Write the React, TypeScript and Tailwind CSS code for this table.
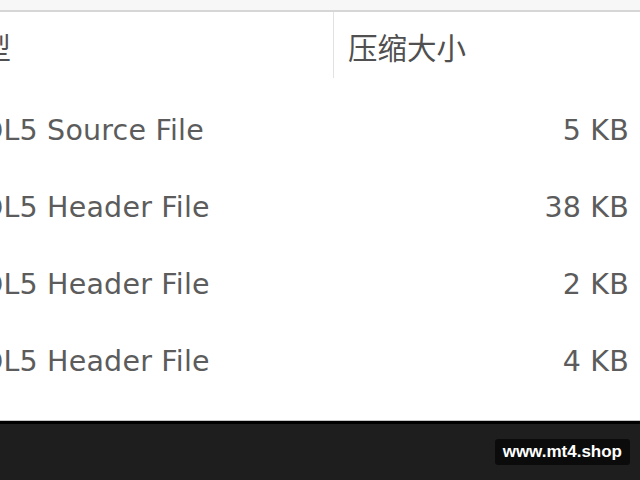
import React from 'react';

const rows = [
  { type: 'MQL5 Source File', size: '5 KB' },
  { type: 'MQL5 Header File', size: '38 KB' },
  { type: 'MQL5 Header File', size: '2 KB' },
  { type: 'MQL5 Header File', size: '4 KB' },
];

const font = { fontFamily: '"DejaVu Sans", "Noto Sans CJK SC", sans-serif' };

export default function App() {
  return (
    <div className="w-[640px] h-[480px] overflow-hidden bg-white flex flex-col" style={font}>
      {/* top strip */}
      <div className="h-[12px] bg-[#f7f7f7] border-b-2 border-[#d6d6d6]" />

      {/* column headers */}
      <div className="flex h-[66px] text-[29.5px] text-[#505050]" style={{ fontFamily: '"Noto Sans CJK SC", sans-serif' }}>
        <div className="w-[334px] border-r border-[#e2e2e2] flex items-center overflow-hidden pt-[3px]">
          <span className="ml-[-48px] whitespace-nowrap">类型</span>
        </div>
        <div className="flex-1 flex items-center pl-[14px] pt-[3px]">压缩大小</div>
      </div>

      {/* rows */}
      <div className="mt-[15px] flex flex-col text-[28.5px] text-[#5c5c5c] tracking-[0.2px]">
        {rows.map((r, i) => (
          <div key={i} className="h-[77px] flex items-center">
            <div className="w-[334px] overflow-hidden whitespace-nowrap">
              <span className="block ml-[-44px]">{r.type}</span>
            </div>
            <div className="flex-1 text-right pr-[11px]">{r.size}</div>
          </div>
        ))}
      </div>

      <div className="flex-1" />

      {/* bottom bar */}
      <div className="h-[59px] bg-[#1e1e1e] border-t-[3px] border-black shadow-[0_-1px_0_#c4c4c4] flex items-center justify-end pr-[10px]">
        <div className="bg-[#0b0b0b] rounded-[3px] px-[8px] h-[26px] flex items-center text-white font-bold text-[17px]" style={{ fontFamily: '"Liberation Sans", Arial, sans-serif' }}>
          www.mt4.shop
        </div>
      </div>
    </div>
  );
}
